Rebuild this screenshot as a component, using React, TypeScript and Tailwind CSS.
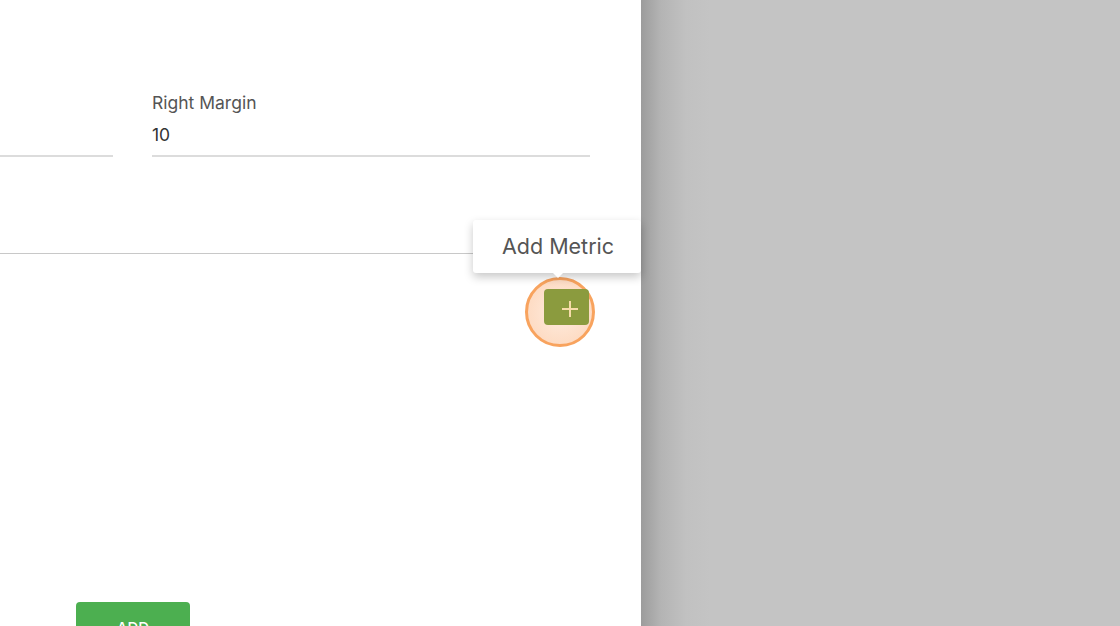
import React from "react";

export default function App() {
  return (
    <div
      className="relative flex h-[626px] w-[1120px] overflow-hidden"
      style={{ fontFamily: "Inter, Roboto, 'Liberation Sans', sans-serif" }}
    >
      {/* Left white panel */}
      <div className="flex h-full w-[641px] shrink-0 flex-col bg-white">
        <div className="flex shrink-0 gap-[39px] pt-[92px]">
          <div className="flex w-[113px] flex-col gap-[8px]">
            <div className="h-[22px]" />
            <div className="mt-[1px] h-[24px]" />
            <div className="h-[2px] bg-[#dcdcdc]" />
          </div>
          <div className="flex w-[438px] flex-col">
            <div className="h-[22px] text-[17.5px] leading-[22px] text-[#555]">Right Margin</div>
            <div className="mt-[9px] h-[24px] text-[17.5px] leading-[24px] text-[#333]">10</div>
            <div className="mt-[8px] h-[2px] bg-[#dcdcdc]" />
          </div>
        </div>

        <div className="mt-[96px] h-px w-full shrink-0 bg-[#c8c8c8]" />

        <div className="flex shrink-0 justify-end pr-[52px] pt-[35px]">
          <div className="relative">
            <div className="absolute left-[-19px] top-[-12px] h-[70px] w-[70px] rounded-full border-[3px] border-[#f8a35e] bg-[radial-gradient(circle,rgba(252,170,110,0.22)_0%,rgba(250,150,80,0.4)_100%)]" />
            <div className="relative flex h-[36px] w-[45px] items-center justify-center rounded-[4px] bg-[#8b9b3e]">
              <svg width="18" height="18" viewBox="0 0 18 18" className="ml-[6px] mt-[4px]">
                <path d="M9 1v16M1 9h16" stroke="#f6dcaa" strokeWidth="2" />
              </svg>
            </div>
          </div>
        </div>

        <div className="ml-[76px] mt-[277px] flex h-[40px] w-[114px] shrink-0 items-start justify-center rounded-[4px] bg-[#4caf50] pt-[15px] text-[15px] font-medium text-white">
          ADD
        </div>
      </div>

      {/* Gray backdrop */}
      <div className="h-full flex-1 bg-[linear-gradient(to_right,#9c9c9c_0px,#b4b4b4_20px,#c1c1c1_45px,#c4c4c4_70px)]" />

      {/* Tooltip */}
      <div className="absolute left-[473px] top-[220px] flex h-[53px] w-[168px] items-center justify-center rounded-[3px] bg-white pl-[2px] text-[21.5px] text-[#555] shadow-[0_4px_10px_rgba(0,0,0,0.22)]">
        Add Metric
        <div className="absolute bottom-[-5px] left-[79px] h-0 w-0 border-l-[6px] border-r-[6px] border-t-[6px] border-l-transparent border-r-transparent border-t-white" />
      </div>
    </div>
  );
}
